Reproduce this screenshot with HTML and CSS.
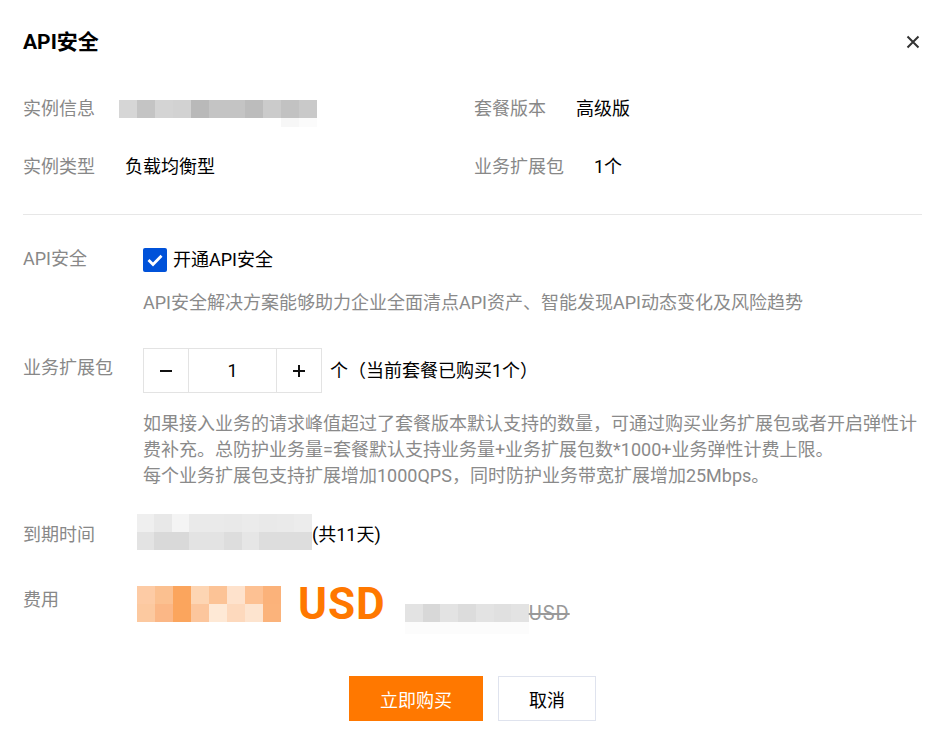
FILE: index.html
```html
<!DOCTYPE html>
<html lang="zh-CN">
<head>
<meta charset="utf-8">
<title>API安全</title>
<link rel="stylesheet" href="styles.css">
</head>
<body>
<div class="dialog">
  <header class="hd">
    <h1 class="title">API安全</h1>
    <button class="close" aria-label="关闭">
      <svg width="14" height="14" viewBox="0 0 14 14"><path d="M1.5 1.5 L12.5 12.5 M12.5 1.5 L1.5 12.5" stroke="#333" stroke-width="2" fill="none"/></svg>
    </button>
  </header>

  <div class="info">
    <div class="info-item"><span class="label">实例信息</span><span class="mask mask-inst"></span></div>
    <div class="info-item"><span class="label">套餐版本</span><span class="val">高级版</span></div>
    <div class="info-item"><span class="label">实例类型</span><span class="val">负载均衡型</span></div>
    <div class="info-item"><span class="label">业务扩展包</span><span class="val">1个</span></div>
  </div>

  <div class="divider"></div>

  <div class="form">
    <div class="form-row row-api">
      <div class="f-label">API安全</div>
      <div class="f-ctrl">
        <label class="checkbox">
          <span class="box"><svg width="24" height="24" viewBox="0 0 24 24"><path d="M5.5 12 L10 16.5 L18.5 7.8" stroke="#fff" stroke-width="2.8" fill="none"/></svg></span>
          <span class="cb-text">开通API安全</span>
        </label>
        <p class="help help-api">API安全解决方案能够助力企业全面清点API资产、智能发现API动态变化及风险趋势</p>
      </div>
    </div>

    <div class="form-row row-pack">
      <div class="f-label f-label-pack">业务扩展包</div>
      <div class="f-ctrl">
        <div class="pack-line">
          <div class="stepper">
            <span class="step-btn"><svg width="14" height="14" viewBox="0 0 14 14"><path d="M1 7 H13" stroke="#111" stroke-width="2"/></svg></span>
            <span class="step-val">1</span>
            <span class="step-btn"><svg width="14" height="14" viewBox="0 0 14 14"><path d="M1 7 H13 M7 1 V13" stroke="#111" stroke-width="2"/></svg></span>
          </div>
          <span class="pack-unit">个（当前套餐已购买1个）</span>
        </div>
        <p class="help help-pack">如果接入业务的请求峰值超过了套餐版本默认支持的数量，可通过购买业务扩展包或者开启弹性计费补充。总防护业务量=套餐默认支持业务量+业务扩展包数*1000+业务弹性计费上限。<br>每个业务扩展包支持扩展增加1000QPS，同时防护业务带宽扩展增加25Mbps。</p>
      </div>
    </div>

    <div class="form-row row-expire">
      <div class="f-label f-label-expire">到期时间</div>
      <div class="f-ctrl expire-line">
        <span class="mask mask-expire"></span><span class="days">(共11天)</span>
      </div>
    </div>

    <div class="form-row row-cost">
      <div class="f-label f-label-cost">费用</div>
      <div class="f-ctrl cost-line">
        <span class="mask mask-price"></span>
        <span class="price-unit">USD</span>
        <span class="orig">
          <span class="mask mask-orig"></span><span class="orig-unit">USD</span>
        </span>
      </div>
    </div>
  </div>

  <div class="footer">
    <button class="btn btn-primary">立即购买</button>
    <button class="btn btn-default">取消</button>
  </div>
</div>
</body>
</html>
```

FILE: styles.css
```css
* { box-sizing: border-box; }

html, body {
  margin: 0;
  padding: 0;
  background: #fff;
}

body {
  font-family: "Roboto", "Noto Sans CJK SC", sans-serif;
  font-size: 18px;
  color: #000;
}

.dialog {
  width: 952px;
  padding: 0 30px 0 23px;
}

.hd {
  height: 84px;
  display: flex;
  align-items: center;
  justify-content: space-between;
}

.title {
  margin: 0;
  font-size: 21px;
  font-weight: 700;
  line-height: 28px;
  color: #000;
}

.close {
  border: 0;
  background: none;
  padding: 0;
  margin-right: 2px;
  width: 14px;
  height: 14px;
  display: flex;
}

/* info grid */
.info {
  margin-top: 12px;
  display: grid;
  grid-template-columns: 451px 1fr;
  row-gap: 32px;
}

.info-item {
  display: flex;
  align-items: flex-start;
  gap: 30px;
  line-height: 26px;
  height: 26px;
}

.label,
.f-label {
  color: #888;
  line-height: 26px;
}

.val { color: #000; }

.mask { display: block; flex: none; }

.mask-inst {
  width: 198px;
  height: 27px;
  margin-left: -6px;
  margin-top: 4px;
  background:
    linear-gradient(to right,
      #d6d6d6 0 18px, #c4c4c4 18px 36px, #d4d4d4 36px 54px, #d2d2d2 54px 72px,
      #b9b9b9 72px 90px, #c4c4c4 90px 108px, #c4c4c4 108px 126px, #bcbcbc 126px 144px,
      #cbcbcb 144px 162px, #c2c2c2 162px 180px, #c9c9c9 180px 198px) 0 0 / 198px 18px no-repeat,
    linear-gradient(to right, #fff 0 162px, #f7f7f7 162px 180px, #fbfbfb 180px 198px) 0 18px / 198px 9px no-repeat;
}

.divider {
  margin-top: 34px;
  height: 1px;
  background: #e7e7e7;
}

/* form */
.form-row {
  display: flex;
  align-items: flex-start;
}

.f-label {
  width: 120px;
  flex: none;
}

.f-ctrl { flex: 1; min-width: 0; }

.row-api { margin-top: 33px; }
.row-api .f-label { line-height: 22px; padding-top: 0; }

.checkbox {
  display: flex;
  align-items: center;
  height: 24px;
  gap: 6px;
}

.box {
  width: 24px;
  height: 24px;
  background: #0052d9;
  border-radius: 2px;
  display: flex;
}

.cb-text { line-height: 22px; color: #000; }

.help {
  margin: 0;
  color: #8a8a8a;
  line-height: 26px;
}

.help-api { margin-top: 18px; }

.row-pack { margin-top: 32px; }
.f-label-pack { padding-top: 7px; }

.pack-line {
  display: flex;
  align-items: center;
}

.stepper {
  display: flex;
  height: 45px;
  border: 1px solid #e3e3e3;
}

.step-btn {
  width: 44px;
  display: flex;
  align-items: center;
  justify-content: center;
}

.step-val {
  width: 89px;
  border-left: 1px solid #e3e3e3;
  border-right: 1px solid #e3e3e3;
  display: flex;
  align-items: center;
  justify-content: center;
  color: #000;
}

.pack-unit {
  margin-left: 8px;
  color: #000;
  line-height: 26px;
}

.help-pack {
  margin-top: 18px;
}

.row-expire { margin-top: 25px; }
.f-label-expire { padding-top: 8px; }

.expire-line {
  display: flex;
  align-items: flex-end;
}

.mask-expire {
  width: 175px;
  height: 36px;
  margin-left: -6px;
  background:
    linear-gradient(to right,
      #efefef 0 10%, #e8e8e8 10% 20%, #f4f4f4 20% 30%, #eaeaea 30% 40%, #eaeaea 40% 50%,
      #e9e9e9 50% 60%, #ebebeb 60% 70%, #e9e9e9 70% 80%, #eaeaea 80% 90%, #ececec 90% 100%) 0 0 / 100% 18px no-repeat,
    linear-gradient(to right,
      #e3e3e3 0 10%, #d9d9d9 10% 20%, #d9d9d9 20% 30%, #e3e3e3 30% 40%, #e3e3e3 40% 50%,
      #dddddd 50% 60%, #e6e6e6 60% 70%, #dddddd 70% 80%, #dddddd 80% 90%, #dddddd 90% 100%) 0 18px / 100% 18px no-repeat;
}

.days {
  line-height: 26px;
  padding-bottom: 2px;
  color: #000;
}

.row-cost { margin-top: 36px; }
.f-label-cost { padding-top: 1px; }

.cost-line {
  display: flex;
  align-items: flex-start;
}

.mask-price {
  width: 144px;
  height: 36px;
  margin-left: -6px;
  background:
    linear-gradient(to right,
      #fdcba5 0 18px, #fbc090 18px 36px, #fba55d 36px 54px, #fdd5b3 54px 72px,
      #fcc396 72px 90px, #fee2cc 90px 108px, #fdc193 108px 126px, #fbb27a 126px 144px) 0 0 / 144px 18px no-repeat,
    linear-gradient(to right,
      #fcc9a0 0 18px, #fbb786 18px 36px, #fba55d 36px 54px, #fcc69d 54px 72px,
      #fee9d6 72px 90px, #fdd9bd 90px 108px, #fde4cf 108px 126px, #fbb37b 126px 144px) 0 18px / 144px 18px no-repeat;
}

.price-unit {
  margin-left: 17px;
  font-size: 44px;
  font-weight: 700;
  letter-spacing: 1px;
  line-height: 36px;
  color: #ff7800;
}

.orig {
  display: flex;
  align-items: flex-start;
  margin-left: 19px;
  margin-top: 18px;
}

.mask-orig {
  width: 124px;
  height: 30px;
  background:
    linear-gradient(to right,
      #e3e3e3 0 14.3%, #d8d8d8 14.3% 28.6%, #e3e3e3 28.6% 42.9%, #dcdcdc 42.9% 57.2%,
      #e3e3e3 57.2% 71.5%, #e0e0e0 71.5% 85.8%, #e3e3e3 85.8% 100%) 0 0 / 100% 18px no-repeat,
    linear-gradient(#fcfcfc, #fcfcfc) 0 18px / 100% 12px no-repeat;
}

.orig-unit {
  font-size: 20px;
  letter-spacing: 1px;
  line-height: 18px;
  color: #999;
  text-decoration: line-through;
}

.footer {
  margin-top: 42px;
  display: flex;
  justify-content: center;
  gap: 15px;
}

.btn {
  height: 45px;
  font-family: inherit;
  font-size: 18px;
  border-radius: 0;
  cursor: pointer;
}

.btn-primary {
  width: 134px;
  background: #ff7800;
  color: #fff;
  border: 0;
}

.btn-default {
  width: 98px;
  background: #fff;
  color: #000;
  border: 1px solid #dfe3ee;
}
```
